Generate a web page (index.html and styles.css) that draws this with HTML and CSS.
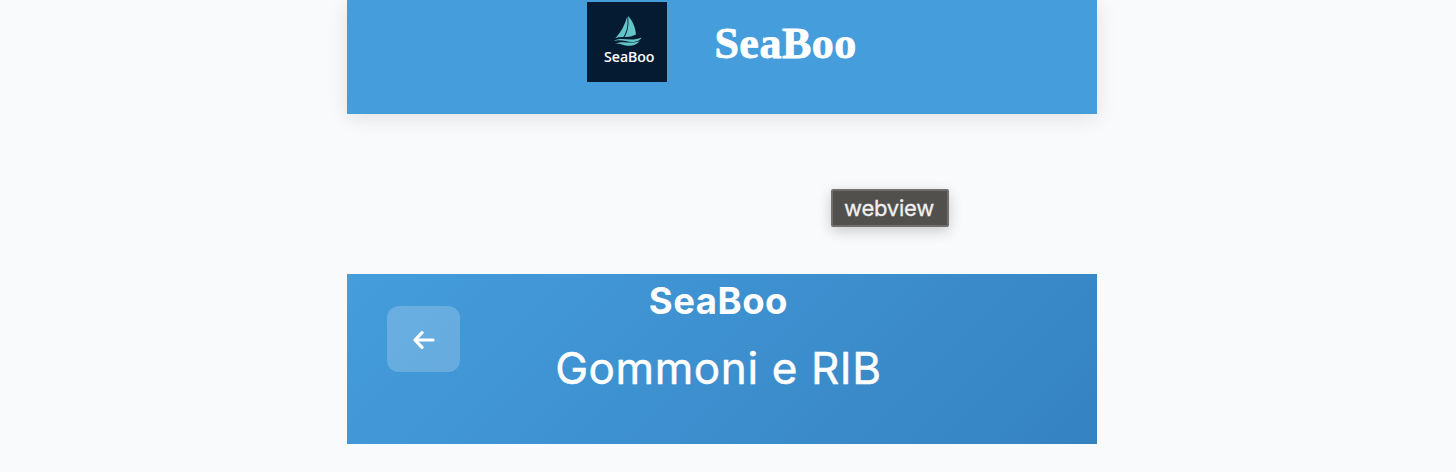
FILE: index.html
```
<!DOCTYPE html>
<html lang="it">
<head>
<meta charset="utf-8">
<title>SeaBoo</title>
<link rel="stylesheet" href="styles.css">
</head>
<body>
<main class="page">
  <header class="brand">
    <svg class="brand-logo" viewBox="0 0 80 80" role="img" aria-label="SeaBoo">
      <rect width="80" height="80" fill="#051b32"/>
      <g fill="#62c5c7">
        <path d="M41 14C46 19 48.500 26 49 32.500Q43 35.500 37.500 35C41.500 29 42 21 41 14Z"/>
        <path d="M40.200 14.500C41.300 23 40 29.500 36.300 35Q32 34.500 28.300 36.300C34 30 38 23 40.200 14.500Z"/>
        <path d="M26.500 39C35 34.300 43 40.500 54.700 35.600Q52 40 46 39.900C39 40 34 36.800 26.500 39Z"/>
        <path d="M28 42C36 37.800 42 42.500 52.700 39.300Q48 44 42 43.800C36 43.800 34 40.800 28 42Z"/>
      </g>
      <text class="logo-text" x="17" y="60.300" textLength="50.500" lengthAdjust="spacingAndGlyphs">SeaBoo</text>
    </svg>
    <span class="brand-name">SeaBoo</span>
  </header>
  <div class="gap"><span class="tooltip">webview</span></div>
  <section class="category">
    <button class="back" aria-label="Indietro">
      <svg width="22" height="20" viewBox="0 0 22 20" fill="none" stroke="#fff" stroke-width="3.200" stroke-linecap="round" stroke-linejoin="round"><path d="M20 10H2.500M9 2.700L2 10L9 17.300"/></svg>
    </button>
    <div class="titles">
      <h1 class="site">SeaBoo</h1>
      <h2 class="title">Gommoni e RIB</h2>
    </div>
  </section>
</main>
</body>
</html>
```
FILE: styles.css
```
* { box-sizing: border-box; }
body {
  margin: 0;
  height: 472px;
  overflow: hidden;
  background: #f9fafc;
  font-family: Inter, "Liberation Sans", sans-serif;
}
.page { width: 750px; margin-left: 347.4px; }
.brand {
  display: flex;
  height: 114px;
  padding: 2px 0 0 240px;
  gap: 47px;
  background: #459ddc;
  box-shadow: 0 4px 20px rgba(0, 0, 0, .1);
}
.brand-logo { width: 80px; height: 80px; flex: none; }
.logo-text {
  font-family: "Noto Sans", sans-serif;
  font-size: 14.5px;
  font-weight: 500;
  fill: #fff;
  stroke: #fff;
  stroke-width: .1px;
}
.brand-name {
  font: 700 44px/84px "Liberation Serif", serif;
  letter-spacing: .5px;
  color: #fff;
  -webkit-text-stroke: .8px #fff;
}
.gap { display: flex; height: 160px; padding: 75px 0 0 483.600px; }
.tooltip {
  width: 118px;
  height: 38px;
  padding-right: 2px;
  border: 2px solid #706f6e;
  border-radius: 2px;
  background: #51504d;
  color: #f0f0f0;
  font-size: 22px;
  letter-spacing: -.25px;
  line-height: 35px;
  text-align: center;
  -webkit-text-stroke: .3px #f0f0f0;
  box-shadow: 0 4px 14px rgba(0, 0, 0, .2);
}
.category {
  display: grid;
  grid-template-columns: 73px 1fr 121px;
  height: 170px;
  padding-left: 40px;
  background: linear-gradient(135deg, #459ddc, #3582c1);
  color: #fff;
}
.back {
  display: flex;
  align-items: center;
  justify-content: center;
  width: 73px;
  height: 66px;
  margin-top: 32px;
  padding: 2px 0 0;
  border: 0;
  border-radius: 12px;
  background: rgba(255, 255, 255, .2);
}
.titles { text-align: center; white-space: nowrap; }
.site { margin: 4.500px 0 0; font-size: 36.500px; line-height: 44px; font-weight: 700; letter-spacing: .5px; }
.title { margin: 17.500px 0 0; font-size: 44px; line-height: 56px; font-weight: 400; letter-spacing: .6px; -webkit-text-stroke: .5px #fff; }
```
